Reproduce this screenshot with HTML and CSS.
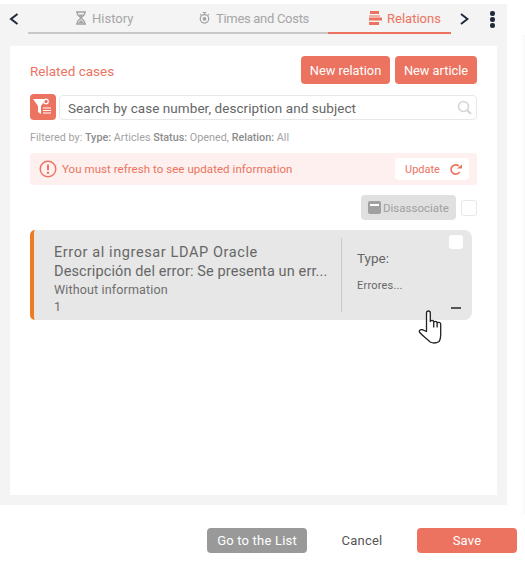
FILE: index.html
```html
<!DOCTYPE html>
<html lang="en">
<head>
    <meta charset="UTF-8">
    <title>Relations</title>
    <link rel="stylesheet" href="styles.css">
</head>
<body>
    <div class="panel">
        <div class="tabbar">
            <svg class="chevron chevron-prev" width="10" height="14" viewBox="0 0 10 14"><path d="M8.500 2 2 7 8.500 12" /></svg>
            <div class="tabs">
                <div class="tab tab-history">
                    <svg width="10" height="14" viewBox="0 0 10 14"><path d="M0 1h10M0 13h10M1.500 1v2.500L8.500 10.500V13M8.500 1v2.500L1.500 10.500V13" fill="none" stroke="#a3a3a3" stroke-width="1.400"/><path d="M2.500 3.500h5L5 6.500zM2 12l3-3 3 3z" fill="#a3a3a3"/></svg>
                    History
                </div>
                <div class="tab tab-times">
                    <svg width="11" height="14" viewBox="0 0 13 15"><circle cx="6.500" cy="8.500" r="5" fill="none" stroke="#a3a3a3" stroke-width="1.500"/><circle cx="6.500" cy="8.500" r="2.200" fill="#a3a3a3"/><path d="M4.500 1h4M6.500 1v2M10.500 3l1.200 1.200M2.500 3 1.300 4.200" stroke="#a3a3a3" stroke-width="1.400" fill="none"/></svg>
                    <span class="times-label">Times and Costs</span>
                </div>
                <div class="tab tab-relations active">
                    <svg width="13" height="14" viewBox="0 0 13 14"><path d="M1 0h9v3H1zM0 4.500h11v1H0zM0 6.500h13v3H0zM0 11h10v3H0z" fill="#ec7360"/></svg>
                    Relations
                </div>
            </div>
            <svg class="chevron chevron-next" width="10" height="14" viewBox="0 0 10 14"><path d="M2 2 8.500 7 2 12" /></svg>
            <div class="dots"><span></span><span></span><span></span></div>
        </div>

        <div class="content">
            <div class="related-head">
                <div class="related-title">Related cases</div>
                <button class="btn btn-new-relation">New relation</button>
                <button class="btn btn-new-article">New article</button>
            </div>

            <div class="search-row">
                <div class="filter-btn">
                    <svg width="20" height="18" viewBox="0 0 20 18"><path d="M0 1h13L8 8v8L5 14V8z" fill="#fff"/><circle cx="13" cy="3.500" r="2.300" fill="none" stroke="#fff" stroke-width="1.200"/><path d="M10 10h8M10 12.500h8M10 15h8" stroke="#fff" stroke-width="1.200"/></svg>
                </div>
                <div class="search-box">
                    <span>Search by case number, description and subject</span>
                    <svg width="15" height="15" viewBox="0 0 15 15"><circle cx="6.500" cy="6.500" r="5" fill="none" stroke="#d4d4d4" stroke-width="1.500"/><path d="M10 10l4 4" stroke="#d4d4d4" stroke-width="2"/></svg>
                </div>
            </div>

            <div class="filtered">Filtered by: <b>Type:</b> Articles <b>Status:</b> Opened, <b>Relation:</b> All</div>

            <div class="alert">
                <svg width="18" height="18" viewBox="0 0 18 18"><circle cx="9" cy="9" r="7.800" fill="none" stroke="#ec7360" stroke-width="1.400"/><path d="M9 4.500v5.500" stroke="#ec7360" stroke-width="2"/><circle cx="9" cy="12.800" r="1.200" fill="#ec7360"/></svg>
                <span class="alert-text">You must refresh to see updated information</span>
                <div class="update-btn">
                    Update
                    <svg width="13" height="13" viewBox="0 0 14 14"><path d="M11.500 9.500A5 5 0 1 1 10.500 3.200" fill="none" stroke="#ec7360" stroke-width="1.800"/><path d="M8.500 6h5.500V1.500z" fill="#ec7360"/></svg>
                </div>
            </div>

            <div class="bulk-row">
                <div class="disassociate">
                    <span class="minus-box"></span>
                    Disassociate
                </div>
                <span class="check"></span>
            </div>

            <div class="card">
                <div class="card-main">
                    <div class="card-title">Error al ingresar LDAP Oracle</div>
                    <div class="card-desc">Descripción del error: Se presenta un err...</div>
                    <div class="card-info">Without information</div>
                    <div class="card-num">1</div>
                </div>
                <div class="card-side">
                    <div class="card-type">Type:</div>
                    <div class="card-errors">Errores...</div>
                </div>
                <span class="check check-card"></span>
                <span class="collapse"></span>
            </div>
        </div>
    </div>

    <div class="footer">
        <button class="btn btn-list">Go to the List</button>
        <button class="btn-cancel">Cancel</button>
        <button class="btn btn-save">Save</button>
    </div>

    <div class="edge"></div>
    <svg class="hand" width="26" height="34" viewBox="0 0 26 34"><path d="M8.500 20V3C8.500 1.700 9.300 1 10.300 1S12.300 1.700 12.300 3V11.500c0-1.500 3.400-1.500 3.400 0v1c0-1.500 3.400-1.500 3.400 0v1c0-1.500 3.600-1.500 3.600 0.500V25c0 3-.5 4.500-1.500 6.500-3 1.800-6.500 1.800-9 .5-3-3-7.500-6-10.500-9.500-1-1.500 0-3.300 2.500-2.800l4.300 1.800zM15.700 11.500v6M19.100 12.500v5" fill="#fff" stroke="#222" stroke-width="1.300" stroke-linejoin="round"/></svg>
</body>
</html>
```

FILE: styles.css
```css
html, body {
    margin: 0;
    height: 564px;
    overflow: hidden;
    background-color: white;
}
body {
    position: relative;
    font-family: Roboto, "Liberation Sans", sans-serif;
    color: #666;
}
svg {
    display: block;
    flex: none;
}
button {
    font-family: inherit;
    border: none;
    cursor: pointer;
}
.panel {
    width: 507px;
    height: 501px;
    margin-top: 4px;
    padding: 0 10px 10px;
    box-sizing: border-box;
    background-color: #f4f4f4;
}
.tabbar {
    display: flex;
    align-items: flex-start;
    height: 42px;
    margin-right: -10px;
}
.chevron {
    margin-top: 8px;
    fill: none;
    stroke: #1d2a3a;
    stroke-width: 2;
}
.chevron-prev {
    margin-left: -1px;
}
.chevron-next {
    margin-left: 8px;
}
.tabs {
    display: flex;
    width: 423px;
    height: 28px;
    margin-left: 9px;
    border-bottom: 2px solid #c8c8c8;
}
.tab {
    display: flex;
    align-items: center;
    height: 28px;
    font-size: 13px;
    color: #a6a6a6;
    box-sizing: border-box;
}
.tab-history {
    width: 169px;
    padding-left: 48px;
    gap: 6px;
}
.tab-times {
    width: 131px;
    padding-left: 2px;
    gap: 6px;
}
.times-label {
    letter-spacing: -0.300px;
}
.tab-relations {
    width: 123px;
    height: 30px;
    padding: 0 0 0 41px;
    gap: 5px;
    margin-bottom: -2px;
    border-bottom: 2px solid #ec7360;
    color: #ec7360;
}
.dots {
    display: flex;
    flex-direction: column;
    gap: 1.500px;
    margin: 7px 0 0 21px;
}
.dots span {
    width: 4.500px;
    height: 4.500px;
    border-radius: 50%;
    background-color: #1d2a3a;
}
.content {
    height: 449px;
    box-sizing: border-box;
    padding: 10px 20px 0;
    background-color: white;
}
.related-head {
    display: flex;
    align-items: center;
    gap: 5px;
    height: 28px;
}
.related-title {
    flex: 1;
    font-size: 13.500px;
    color: #ec7360;
    padding-top: 2px;
}
.btn {
    height: 28px;
    padding: 0;
    border-radius: 4px;
    color: white;
    background-color: #ec7360;
    font-size: 12.800px;
}
.btn-new-relation {
    width: 89px;
}
.btn-new-article {
    width: 82px;
}
.search-row {
    display: flex;
    align-items: center;
    gap: 3px;
    margin-top: 10px;
}
.filter-btn {
    display: flex;
    align-items: center;
    justify-content: center;
    width: 26px;
    height: 26px;
    border-radius: 4px;
    background-color: #ec7360;
}
.search-box {
    flex: 1;
    display: flex;
    align-items: center;
    justify-content: space-between;
    height: 23px;
    margin-top: 1px;
    padding: 0 4px 0 8px;
    border: 1px solid #e8e8e8;
    border-radius: 4px;
    font-size: 13.500px;
    letter-spacing: 0.060px;
    color: #666;
}
.filtered {
    margin-top: 11px;
    font-size: 10.800px;
    color: #a2a2a2;
}
.filtered b {
    font-weight: 500;
    color: #8c8c8c;
}
.alert {
    display: flex;
    align-items: center;
    gap: 5px;
    height: 32px;
    margin-top: 9px;
    padding: 0 8px 0 9px;
    border-radius: 4px;
    background-color: #fdf0ee;
}
.alert-text {
    flex: 1;
    font-size: 11.500px;
    letter-spacing: 0.050px;
    color: #ec7360;
}
.update-btn {
    display: flex;
    align-items: center;
    justify-content: space-between;
    width: 74px;
    height: 22px;
    padding: 0 7px 0 10px;
    box-sizing: border-box;
    border-radius: 4px;
    background-color: white;
    font-size: 11px;
    color: #ec7360;
}
.bulk-row {
    display: flex;
    align-items: center;
    justify-content: flex-end;
    gap: 5px;
    margin-top: 10px;
}
.disassociate {
    display: flex;
    align-items: center;
    gap: 2px;
    width: 95px;
    height: 25px;
    padding-left: 7px;
    box-sizing: border-box;
    border-radius: 4px;
    background-color: #dfe0df;
    font-size: 11.500px;
    color: #a0a0a0;
}
.minus-box {
    position: relative;
    width: 13px;
    height: 13px;
    border-radius: 2px;
    background-color: #a0a0a0;
}
.minus-box::after {
    content: "";
    position: absolute;
    left: 2px;
    top: 3px;
    width: 9px;
    height: 2px;
    background-color: white;
}
.check {
    width: 14px;
    height: 14px;
    border: 1px solid #e8e8e8;
    border-radius: 3px;
    background-color: white;
}
.card {
    position: relative;
    display: flex;
    width: 442px;
    height: 90px;
    margin-top: 10px;
    padding: 8px 0 8px 20px;
    box-sizing: border-box;
    border-left: 4px solid #ee7a22;
    border-radius: 5px 8px 8px 5px;
    background-color: #e7e7e7;
}
.card-main {
    width: 287px;
    border-right: 1px solid #c9c9c9;
    margin-right: 15px;
    color: #666;
}
.card-title {
    margin-top: 5px;
    font-size: 14.500px;
    letter-spacing: 0.600px;
    line-height: 19px;
    white-space: nowrap;
}
.card-desc {
    font-size: 14.500px;
    letter-spacing: 0.120px;
    line-height: 19px;
    white-space: nowrap;
}
.card-info, .card-num {
    font-size: 12.500px;
    letter-spacing: 0.150px;
    line-height: 17px;
    color: #6e6e6e;
}
.card-type {
    margin-top: 12px;
    font-size: 13.500px;
    line-height: 16px;
}
.card-errors {
    margin-top: 13px;
    font-size: 11px;
    letter-spacing: 0.200px;
    line-height: 14px;
}
.check-card {
    position: absolute;
    top: 5px;
    right: 9px;
    border: none;
    width: 14px;
    height: 14px;
}
.collapse {
    position: absolute;
    right: 11px;
    bottom: 11px;
    width: 10px;
    height: 2px;
    background-color: #555;
}
.footer {
    display: flex;
    align-items: center;
    height: 25px;
    margin-top: 23px;
    padding-left: 207px;
}
.footer .btn {
    height: 25px;
    font-size: 13px;
    letter-spacing: 0.200px;
}
.btn-list {
    width: 100px;
    background-color: #999;
}
.btn-cancel {
    width: 110px;
    padding: 0;
    background: none;
    font-size: 13px;
    letter-spacing: 0.200px;
    color: #555;
}
.btn-save {
    width: 100px;
}
.edge {
    position: absolute;
    top: 35px;
    right: 0;
    width: 4px;
    height: 480px;
    background: linear-gradient(to right, white, #f8f8f8);
}
.hand {
    position: absolute;
    left: 418px;
    top: 310px;
}
```
